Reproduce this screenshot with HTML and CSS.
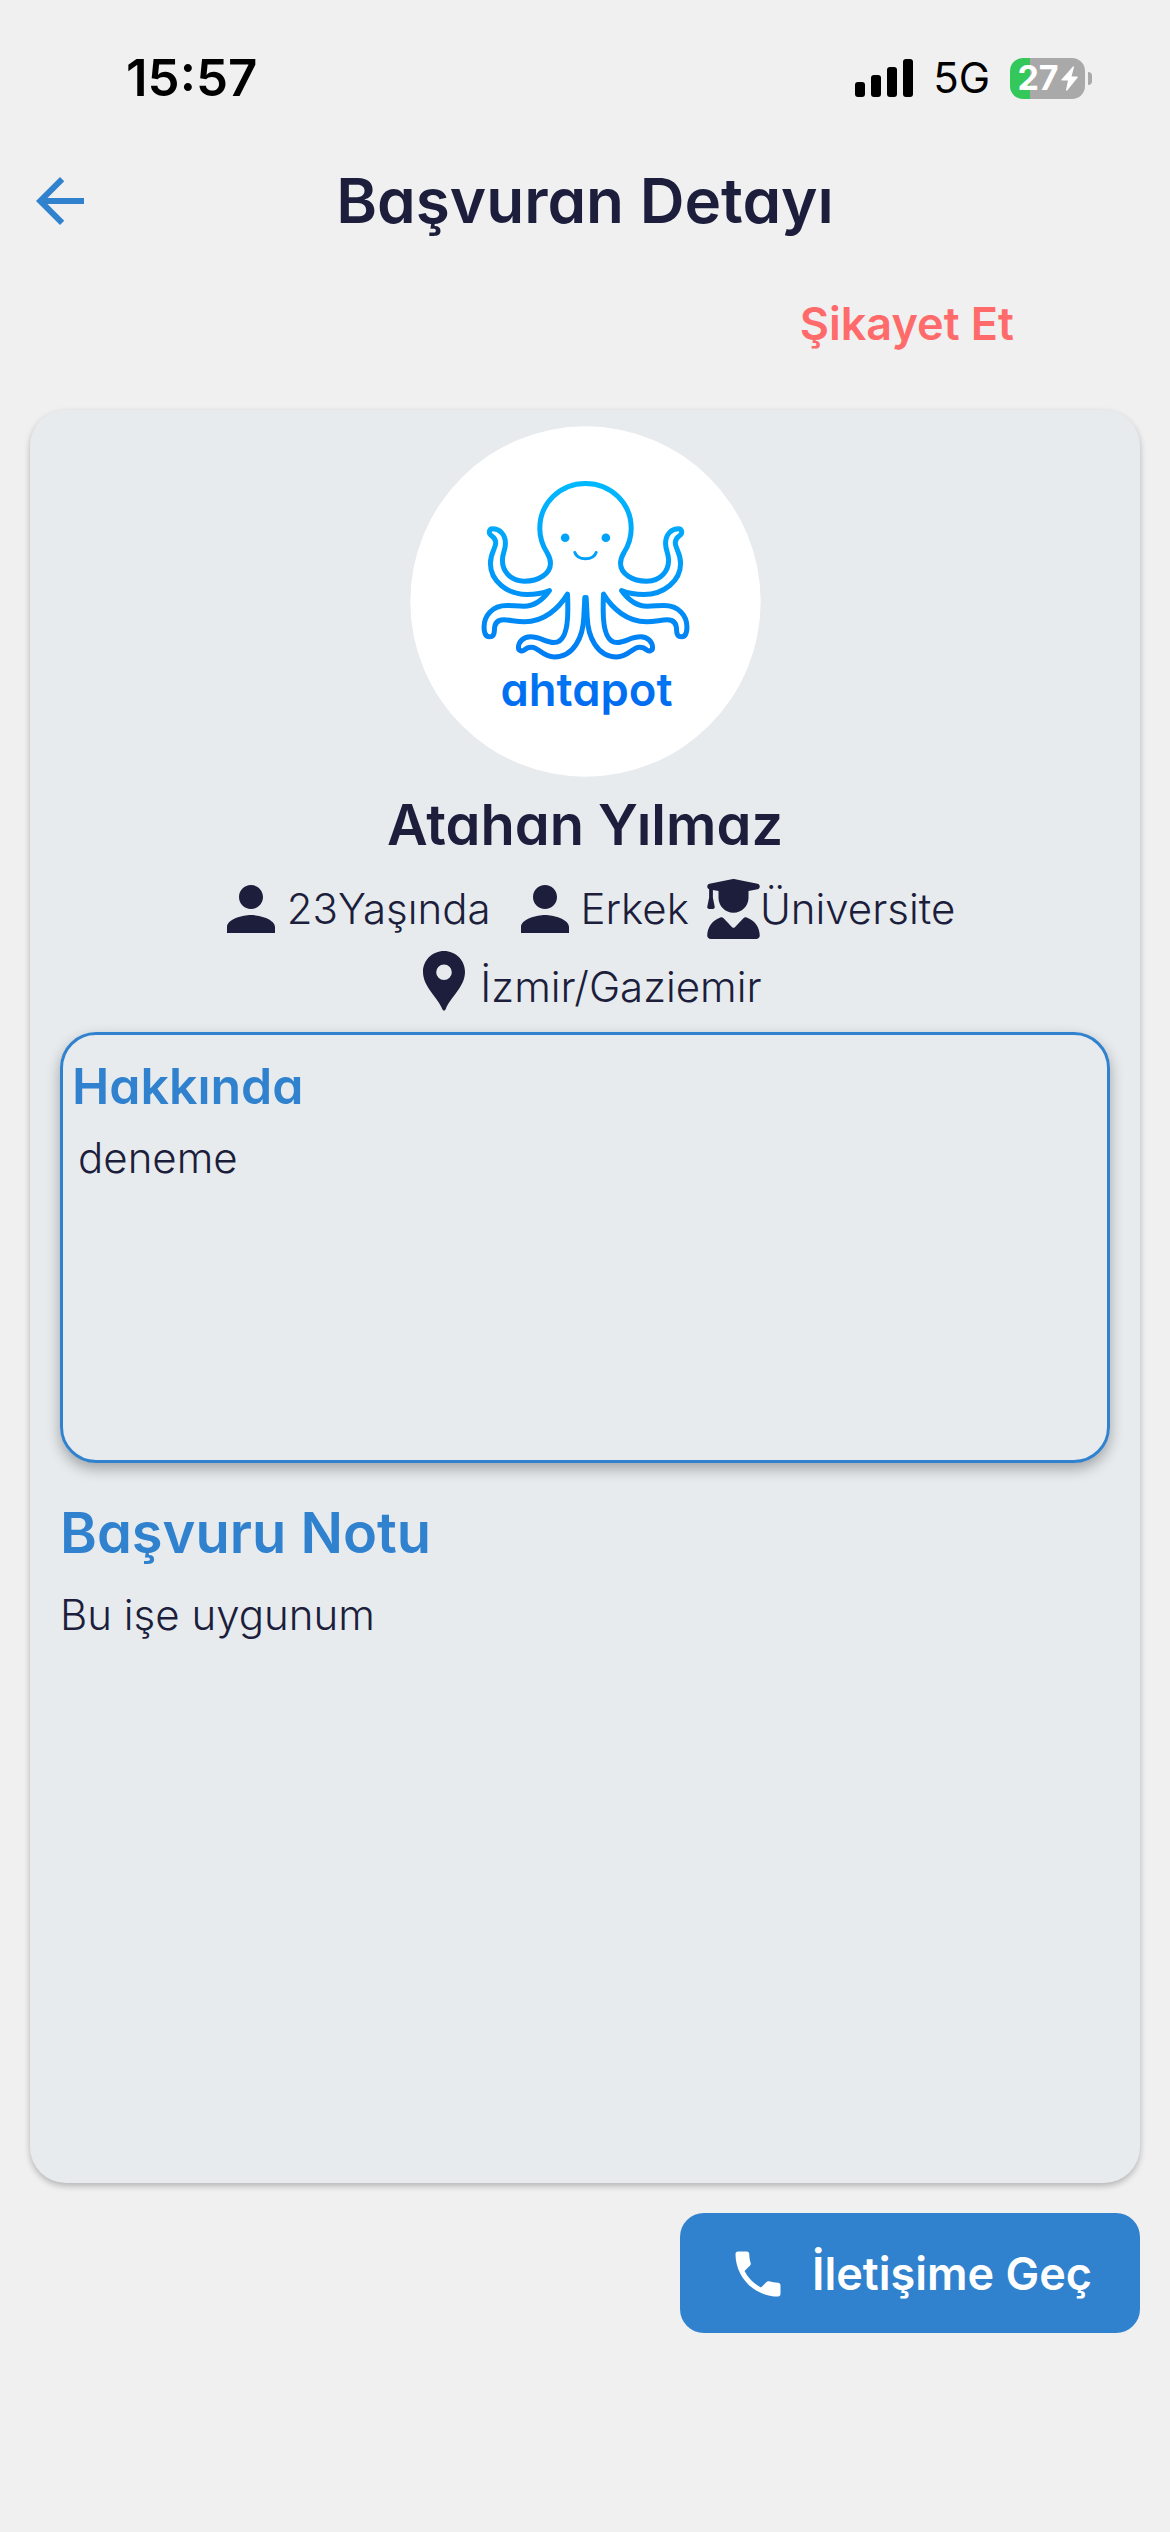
FILE: index.html
```
<!DOCTYPE html>
<html lang="tr">
<head>
    <meta charset="UTF-8">
    <meta name="viewport" content="width=device-width, initial-scale=1.0">
    <title>Başvuran Detayı</title>
    <link rel="stylesheet" href="styles.css">
</head>
<body>
    <div class="status-bar">
        <span class="time">15:57</span>
        <div class="status-right">
            <svg class="signal" viewBox="0 0 58 38" aria-hidden="true">
                <rect x="0" y="23" width="10" height="15" rx="3"/>
                <rect x="16" y="16" width="10" height="22" rx="3"/>
                <rect x="32" y="8" width="10" height="30" rx="3"/>
                <rect x="48" y="0" width="10" height="38" rx="3"/>
            </svg>
            <span class="network">5G</span>
            <div class="battery">
                <div class="battery-body">
                    <span>27</span>
                    <svg class="bolt" viewBox="0 0 17 25" aria-hidden="true">
                        <path d="M12 0.500L0.500 13.500Q0 14.500 1 14.500H7L5 24Q5.300 25.200 6.200 24.500L16.700 11.500Q17 10.500 16 10.500H10.500L13 1Q13 0 12 0.500Z"/>
                    </svg>
                </div>
                <div class="battery-tip"></div>
            </div>
        </div>
    </div>

    <header class="header">
        <button type="button" class="back" aria-label="Geri">
            <svg class="icon" viewBox="0 0 24 24"><path d="M20 11H7.830l5.590-5.590L12 4l-8 8 8 8 1.410-1.410L7.830 13H20v-2z"/></svg>
        </button>
        <h1>Başvuran Detayı</h1>
    </header>

    <div class="report">
        <button type="button" class="report-btn">Şikayet Et</button>
    </div>

    <main class="card">
        <svg class="avatar" viewBox="30 48 1050 1052" role="img" aria-label="ahtapot">
            <defs>
                <linearGradient id="mavi" gradientUnits="userSpaceOnUse" x1="0" y1="215" x2="0" y2="900">
                    <stop offset="0" stop-color="#00b9ff"/>
                    <stop offset="0.300" stop-color="#00a2fa"/>
                    <stop offset="1" stop-color="#006af0"/>
                </linearGradient>
                <!-- sol yarı, sağ taraf aynalanıyor -->
                <path id="yarim" d="M555 220C478 220 418 280 418 355C418 385 428 409 440 428C447 440 450 447 450 460C450 490 415 513 372 513C325 513 306 478 306 450C306 430 315 420 315 400C315 372 297 356 277 356C265 356 265 369 270 374C278 380 286 384 286 398C286 416 270 428 270 460C270 512 320 553 380 553C407 553 430 548 447 541C430 565 408 588 370 588C350 588 338 586 320 586C274 586 251 618 251 650C251 668 254 680 267 680C279 680 282 672 282 660C282 641 290 629 310 629C330 629 345 635 372 635C430 635 475 595 501 552C502 570 502 585 502 600C502 660 490 697 460 697C435 697 420 680 390 680C368 680 354 695 354 712C354 723 366 724 372 719C377 714 384 711 393 711C415 711 425 740 462 740C520 740 548 680 550 620L553 562"/>
            </defs>
            <circle cx="555" cy="574" r="525" fill="#fff"/>
            <g fill="none" stroke="url(#mavi)" stroke-width="15" stroke-linejoin="round" stroke-linecap="round">
                <use href="#yarim"/>
                <use href="#yarim" transform="translate(1110 0) scale(-1 1)"/>
                <path d="M523 427C532 452 578 452 587 427" stroke-width="9"/>
            </g>
            <circle cx="494" cy="383" r="13" fill="#00a2fa"/>
            <circle cx="616" cy="383" r="13" fill="#00a2fa"/>
            <text class="logo-text" x="558" y="886" text-anchor="middle" fill="url(#mavi)">ahtapot</text>
        </svg>

        <h2 class="name">Atahan Yılmaz</h2>

        <div class="info">
            <span class="item">
                <svg class="icon" viewBox="0 0 24 24" aria-hidden="true"><path d="M12 12c2.210 0 4-1.790 4-4s-1.790-4-4-4-4 1.790-4 4 1.790 4 4 4zm0 2c-2.670 0-8 1.340-8 4v2h16v-2c0-2.660-5.330-4-8-4z"/></svg>
                23Yaşında
            </span>
            <span class="item">
                <svg class="icon" viewBox="0 0 24 24" aria-hidden="true"><path d="M12 12c2.210 0 4-1.790 4-4s-1.790-4-4-4-4 1.790-4 4 1.790 4 4 4zm0 2c-2.670 0-8 1.340-8 4v2h16v-2c0-2.660-5.330-4-8-4z"/></svg>
                Erkek
            </span>
            <span class="item">
                <svg class="icon-graduate" viewBox="0 0 448 512" aria-hidden="true"><path d="M219.300 .5c3.100-.6 6.300-.6 9.400 0l200 40C439.900 42.700 448 52.600 448 64s-8.100 21.300-19.300 23.500L352 102.900V160c0 70.700-57.300 128-128 128s-128-57.300-128-128V102.900L48 93.300v65.100l15.700 78.400c.9 4.700-.3 9.600-3.300 13.300s-7.600 5.900-12.400 5.900H16c-4.800 0-9.300-2.100-12.400-5.900s-4.300-8.600-3.300-13.300L16 158.400V86.600C6.500 83.300 0 74.300 0 64C0 52.600 8.100 42.700 19.300 40.500l200-40zM111.900 327.700c10.500-3.400 21.800 .4 29.400 8.500l71 75.500c6.300 6.700 17 6.700 23.300 0l71-75.500c7.600-8.100 18.900-11.900 29.400-8.500C401 348.600 448 409.400 448 481.300c0 17-13.800 30.700-30.700 30.700H30.700C13.800 512 0 498.200 0 481.300c0-71.900 47-132.700 111.900-153.600z"/></svg>
                Üniversite
            </span>
        </div>
        <div class="info">
            <span class="item location">
                <svg class="icon" viewBox="0 0 24 24" aria-hidden="true"><path d="M12 2C8.100 2 5 5.100 5 8.900C5 14 10 17.500 11.400 21.300Q12 22.500 12.600 21.300C14 17.500 19 14 19 8.900C19 5.100 15.900 2 12 2zM12 11.700a2.600 2.600 0 1 1 0-5.200a2.600 2.600 0 0 1 0 5.200z"/></svg>
                İzmir/Gaziemir
            </span>
        </div>

        <section class="about">
            <h3>Hakkında</h3>
            <p>deneme</p>
        </section>

        <section class="note">
            <h2>Başvuru Notu</h2>
            <p>Bu işe uygunum</p>
        </section>
    </main>

    <footer class="footer">
        <button type="button" class="contact-btn">
            <svg class="icon-phone" viewBox="0 0 24 24" aria-hidden="true"><path d="M6.620 10.790c1.440 2.830 3.760 5.140 6.590 6.590l2.200-2.200c.270-.270.670-.360 1.020-.240 1.120.370 2.330.570 3.570.570.550 0 1 .450 1 1V20c0 .550-.450 1-1 1-9.390 0-17-7.610-17-17 0-.550.450-1 1-1h3.500c.550 0 1 .450 1 1 0 1.250.200 2.450.570 3.570.110.350.030.740-.250 1.020l-2.200 2.200z"/></svg>
            İletişime Geç
        </button>
    </footer>
</body>
</html>
```

FILE: styles.css
```
* {
    box-sizing: border-box;
}
body {
    display: flex;
    flex-direction: column;
    min-height: 100vh;
    margin: 0;
    background-color: #f0f0f0;
    color: #1c1e3c;
    font-family: Inter, sans-serif;
    font-size: 42px;
    font-weight: 300;
    line-height: 60px;
}
h1, h2, h3, p {
    margin: 0;
}
h1, h2, h3 {
    font-weight: 600;
    font-feature-settings: "cv11";
}
button {
    padding: 0;
    border: none;
    background: none;
    font-family: inherit;
    font-size: 45px;
    font-weight: 600;
    cursor: pointer;
}
svg {
    display: block;
    flex-shrink: 0;
    fill: currentColor;
}

.status-bar {
    display: flex;
    justify-content: space-between;
    padding: 48px 78px 0 126px;
    color: #000;
}
.time {
    font-size: 51px;
    font-weight: 600;
}
.status-right {
    display: flex;
    align-items: center;
    gap: 20px;
}
.signal {
    width: 58px;
    height: 38px;
}
.network {
    font-weight: 400;
}
.battery {
    display: flex;
    align-items: center;
    gap: 3px;
}
.battery-body {
    display: flex;
    align-items: center;
    justify-content: center;
    gap: 2px;
    width: 75px;
    height: 41px;
    border-radius: 13px;
    background: linear-gradient(to right, #34c759 20px, #a9a9a9 20px);
    color: #fff;
    font-size: 34px;
    font-weight: 700;
}
.bolt {
    width: 17px;
    height: 25px;
}
.battery-tip {
    width: 4px;
    height: 13px;
    border-radius: 0 4px 4px 0;
    background-color: #a9a9a9;
}

.header {
    display: grid;
    grid-template-columns: 72px 1fr 72px;
    align-items: center;
    padding: 57px 24px 0;
}
.back {
    color: #3182ce;
}
.header h1 {
    font-size: 62px;
    line-height: 72px;
    text-align: center;
}
.icon {
    width: 72px;
    height: 72px;
}

.report {
    display: flex;
    justify-content: flex-end;
    padding: 57px 156px 56px;
}
.report-btn {
    color: #ff6b6b;
    line-height: 60px;
}

.card {
    flex: 1;
    margin: 0 30px;
    padding: 16px 30px 30px;
    border-radius: 36px;
    background-color: #e7ebee;
    box-shadow: 0 3px 6px rgba(0, 0, 0, 0.25);
}
.avatar {
    width: 351px;
    height: 351px;
    margin: 0 auto;
}
.logo-text {
    font-size: 136px;
    font-weight: 600;
    font-feature-settings: "cv11";
}
.name {
    margin: 12px 0;
    font-size: 56px;
    line-height: 72px;
    text-align: center;
}
.info {
    display: flex;
    justify-content: center;
    gap: 18px;
    height: 72px;
}
.item {
    display: flex;
    align-items: center;
}
.location {
    align-items: flex-end;
}
.icon-graduate {
    width: 53px;
    height: 60px;
}

.about {
    min-height: 431px;
    margin-top: 15px;
    padding: 21px 9px;
    border: 3px solid #3182ce;
    border-radius: 36px;
    box-shadow: 0 6px 14px rgba(0, 0, 0, 0.3);
}
.about h3 {
    color: #3182ce;
    font-size: 50px;
}
.about p {
    padding: 12px 6px;
}
.note {
    padding-top: 34px;
}
.note h2 {
    color: #3182ce;
    font-size: 56px;
    line-height: 72px;
}
.note p {
    padding-top: 16px;
}

.footer {
    display: flex;
    justify-content: flex-end;
    padding: 30px 30px 199px;
}
.contact-btn {
    display: flex;
    align-items: center;
    gap: 24px;
    padding: 31px 48px 29px;
    border-radius: 24px;
    background-color: #3182ce;
    color: #fff;
    line-height: 60px;
}
.icon-phone {
    width: 60px;
    height: 60px;
}
```
